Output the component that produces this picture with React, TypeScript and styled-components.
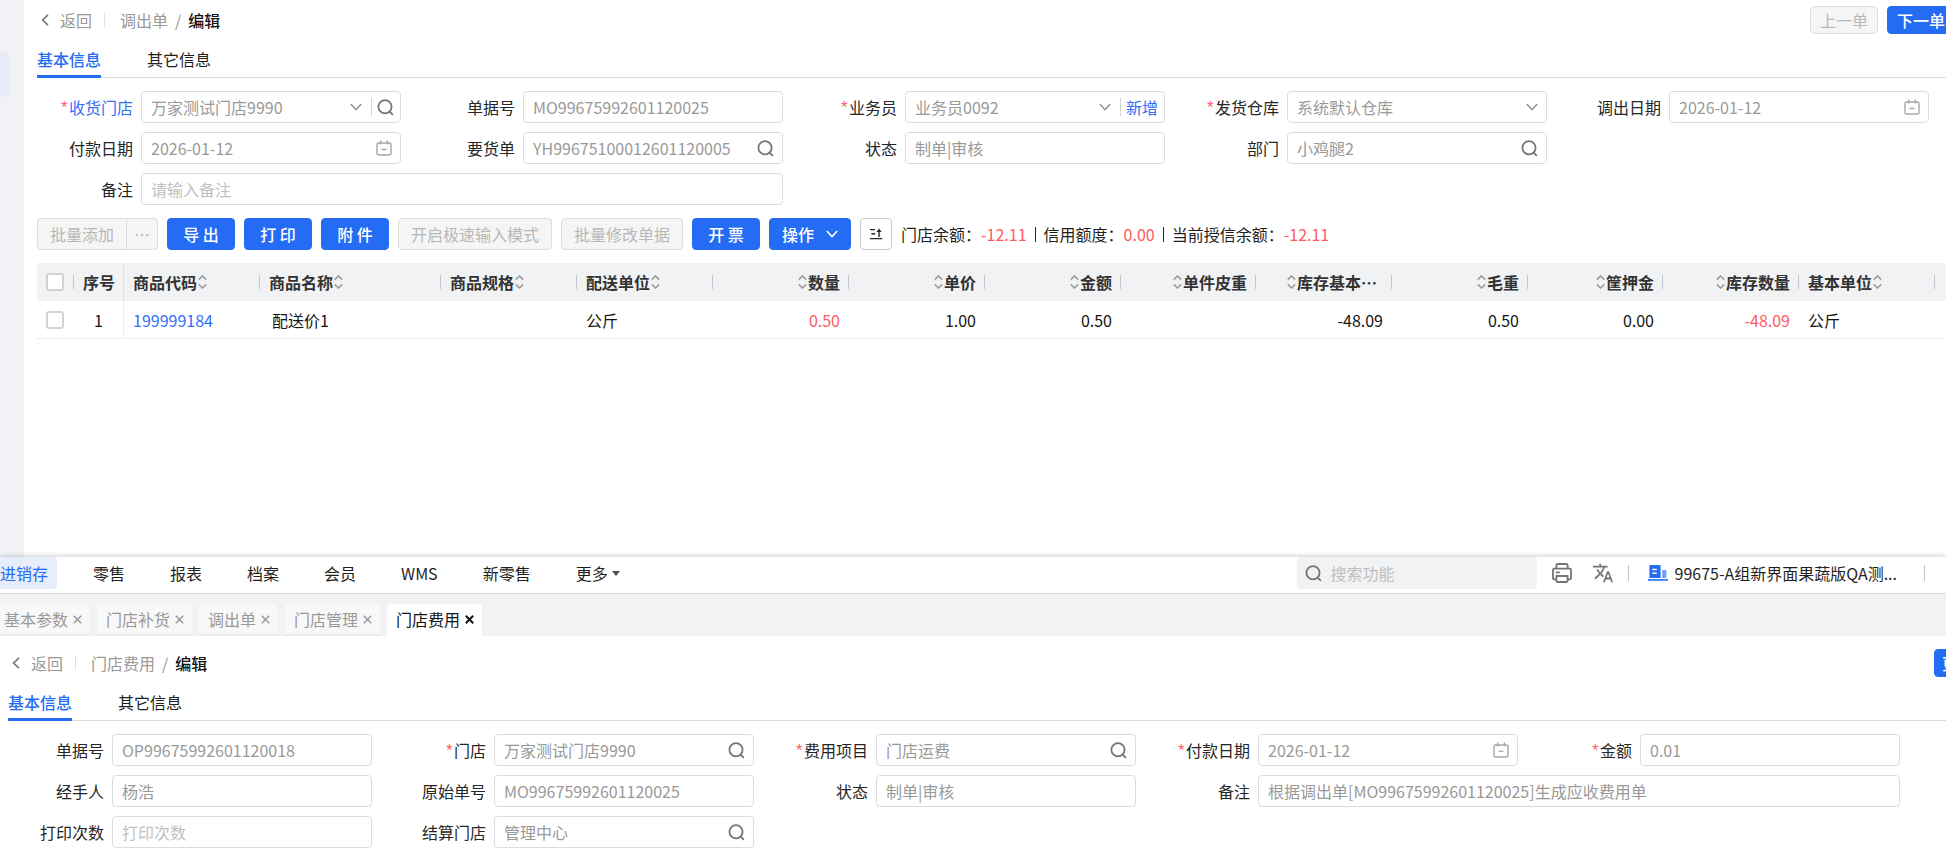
import React, { useId, useState } from "react";
import styled, { createGlobalStyle, css } from "styled-components";
import { MdTranslate } from "react-icons/md";

const BLUE = "#246cf4";
const RED = "#ff5a5f";

const GlobalStyle = createGlobalStyle`
  *, *::before, *::after { box-sizing: border-box; }
  html { overflow: hidden; }
  body { margin: 0; background: #fff; color: #1f1f1f; font: 16px/24px "Noto Sans CJK SC", sans-serif; }
  button, input, select { font: inherit; color: inherit; margin: 0; }
  a { color: inherit; text-decoration: none; }
  svg { display: block; flex: none; }
`;

/* ---------- icons ---------- */

const SearchIcon = () => (
  <svg width="17" height="17" viewBox="0 0 17 17" fill="none" stroke="#757575" strokeWidth="1.8" strokeLinecap="round">
    <circle cx="8" cy="7.8" r="6.6" />
    <path d="M12.6 12.6 15.4 15.4" />
  </svg>
);

const CaretIcon = ({ color = "#999" }: { color?: string }) => (
  <svg width="12" height="8" viewBox="0 0 12 8" fill="none" stroke={color} strokeWidth="1.6">
    <path d="M.8 1 6 6.6 11.2 1" />
  </svg>
);

const CalendarIcon = () => (
  <svg width="16" height="16" viewBox="0 0 16 16" fill="none" stroke="#a6a6a6" strokeWidth="1.4">
    <rect x="1" y="3" width="14" height="12" rx="1.4" />
    <path d="M4.6 .6v4M11.4 .6v4" />
    <path d="M5.6 9.4h4.8" />
  </svg>
);

const BackIcon = () => (
  <svg width="8" height="12" viewBox="0 0 8 12" fill="none" stroke="#757575" strokeWidth="1.6">
    <path d="M7 .8 1.6 6 7 11.2" />
  </svg>
);

const SortIcon = () => (
  <svg width="9" height="14" viewBox="0 0 9 14" fill="none" stroke="#999" strokeWidth="1.5">
    <path d="M.8 4.6 4.5 1 8.2 4.6M.8 9.4 4.5 13 8.2 9.4" />
  </svg>
);

const RaiseIcon = () => (
  <svg width="14" height="12" viewBox="0 0 14 12" fill="none" stroke="#262626" strokeWidth="1.4">
    <path d="M1 1.6h5M2.4 5.8h3.8M.8 10.6h12.4" />
    <path d="M10 9V3" />
    <path d="M7.4 4 10 .4 12.600 4z" fill="#262626" stroke="none" />
  </svg>
);

const CloseIcon = ({ strong }: { strong?: boolean }) => (
  <svg width="9" height="9" viewBox="0 0 9 9" stroke={strong ? "#111" : "#999"} strokeWidth={strong ? 2 : 1.5}>
    <path d="M.8 .8 8.2 8.2M8.2 .8 .8 8.2" />
  </svg>
);

const PrinterIcon = () => (
  <svg width="20" height="20" viewBox="0 0 20 20" fill="none" stroke="#757575" strokeWidth="1.8" strokeLinejoin="round">
    <path d="M4.4 5.6V2.2q0-1.2 1.2-1.2h8.8q1.2 0 1.2 1.2v3.4" />
    <path d="M4.4 16.4H2.2q-1.2 0-1.2-1.2V7q0-1.4 1.4-1.4h15.2Q19 5.6 19 7v8.2q0 1.2-1.2 1.2h-2.2" />
    <path d="M4.4 13h11.2v4.8q0 1.2-1.2 1.2H5.6q-1.2 0-1.2-1.2z" />
    <path d="M3.8 9.4h4" />
  </svg>
);

const CompanyIcon = () => (
  <svg width="20" height="16" viewBox="0 0 20 16">
    <path d="M2.6 0h8.8q1.2 0 1.2 1.2V13H1.4V1.2Q1.4 0 2.6 0z" fill={BLUE} />
    <path d="M4.4 4.4h4.4M4.4 8.2h4.4" stroke="#fff" strokeWidth="1.5" />
    <path d="M14.2 5h3.2q1 0 1 1v7h-4.2z" fill="#6f9df8" />
    <path d="M0 14.9h20" stroke={BLUE} strokeWidth="1.6" />
  </svg>
);

/* ---------- page panels ---------- */

const Page = styled.div`
  display: flex;
  flex-direction: column;
  min-height: 100vh;
  overflow: hidden;
`;

const TopPanel = styled.div`
  flex: 1;
  display: flex;
`;

const SideRail = styled.aside`
  flex: none;
  width: 24px;
  padding-top: 52px;
  background: #f1f2f5;
`;

const RailItem = styled.div`
  width: 10px;
  height: 45px;
  border-radius: 0 8px 8px 0;
  background: #e8ebf6;
`;

const Sheet = styled.main`
  flex: 1;
  min-width: 0;
  padding-left: 13px;
`;

const BottomPanel = styled.div`
  background: #fff;
  box-shadow: 0 -1px 5px rgba(0, 0, 0, 0.2);
`;

const LowerSheet = styled.main`
  padding: 7px 0 10px 8px;
`;

/* ---------- breadcrumb row ---------- */

const CrumbRow = styled.header`
  display: flex;
  align-items: center;
  justify-content: space-between;
  height: 40px;
`;

const Crumbs = styled.nav`
  display: flex;
  align-items: center;
  padding-left: 4px;
  color: #999;
`;

const CrumbLink = styled.a`
  display: flex;
  align-items: center;
  gap: 11px;
`;

const CrumbRule = styled.span`
  width: 1px;
  height: 14px;
  margin: 0 15px 0 12px;
  background: #e0e0e0;
`;

const Slash = styled.span`
  margin: 0 7px;
`;

const CrumbCurrent = styled.span`
  color: #141414;
  font-weight: 500;
`;

const Actions = styled.div<{ $overhang: number }>`
  display: flex;
  gap: 9px;
  margin-right: -${(p) => p.$overhang}px;
`;

/* ---------- buttons ---------- */

const Button = styled.button<{ $kind?: "primary" | "muted" | "plain"; $small?: boolean; $width?: number }>`
  display: inline-flex;
  align-items: center;
  justify-content: center;
  gap: 12px;
  height: ${(p) => (p.$small ? 28 : 32)}px;
  padding: 0 12px;
  ${(p) => p.$width && css`width: ${p.$width}px; padding: 0;`}
  border: 1px solid ${BLUE};
  border-radius: 4px;
  background: ${BLUE};
  color: #fff;
  font-weight: 500;
  white-space: pre;
  ${(p) =>
    p.$kind === "muted" &&
    css`
      border-color: #dcdcdc;
      background: #f5f5f5;
      color: #b8b8b8;
      font-weight: 400;
    `}
  ${(p) =>
    p.$kind === "plain" &&
    css`
      border-color: #c8c8c8;
      background: #fff;
    `}
`;

const SplitButton = styled.div`
  display: flex;
  ${Button}:first-child { border-radius: 4px 0 0 4px; }
  ${Button}:last-child { border-left: 0; border-radius: 0 4px 4px 0; }
`;

/* ---------- tabs ---------- */

const TabRow = styled.div`
  display: flex;
  gap: 46px;
  border-bottom: 1px solid #dcdcdc;
`;

const Tab = styled.button<{ $active?: boolean }>`
  height: 38px;
  margin-bottom: -1px;
  padding: 3px 0 0;
  border: 0;
  border-bottom: 3px solid ${(p) => (p.$active ? BLUE : "transparent")};
  background: none;
  color: ${(p) => (p.$active ? BLUE : "#1f1f1f")};
  font-weight: ${(p) => (p.$active ? 500 : 400)};
`;

/* ---------- form ---------- */

const FormGrid = styled.form<{ $right: number }>`
  display: grid;
  grid-template-columns: repeat(5, minmax(0, 1fr));
  gap: 9px 18px;
  padding: 13px ${(p) => p.$right}px 0 0;
`;

const FieldRow = styled.div<{ $span: number }>`
  grid-column: span ${(p) => p.$span};
  display: flex;
  align-items: center;
`;

const Label = styled.label<{ $link?: boolean }>`
  flex: none;
  display: flex;
  justify-content: flex-end;
  align-items: center;
  width: 104px;
  padding-right: 8px;
  white-space: nowrap;
  color: ${(p) => (p.$link ? "#3370f5" : "#262626")};
`;

const Star = styled.span`
  color: ${RED};
  font-family: "Liberation Mono", monospace;
  padding-top: 3px;
`;

const Box = styled.div<{ $tight?: boolean }>`
  flex: 1;
  min-width: 0;
  display: flex;
  align-items: center;
  gap: 9px;
  height: 32px;
  padding: 0 ${(p) => (p.$tight ? 6 : 8)}px 0 9px;
  border: 1px solid #dcdcdc;
  border-radius: 4px;
  background: #fff;
`;

const control = css`
  flex: 1;
  min-width: 0;
  height: 30px;
  padding: 0;
  border: 0;
  outline: 0;
  background: none;
  color: #999;
`;

const Input = styled.input`
  ${control}
  &::placeholder { color: #bfbfbf; opacity: 1; }
`;

const Select = styled.select`
  ${control}
  appearance: none;
`;

const Inset = styled.span`
  display: flex;
  align-items: center;
  gap: 5px;
`;

const InsetRule = styled.i`
  width: 1px;
  height: 18px;
  background: #d4d4d4;
`;

const IconButton = styled.button`
  display: flex;
  padding: 0;
  border: 0;
  background: none;
  color: #3370f5;
  line-height: 24px;
  white-space: nowrap;
`;

type FieldProps = {
  label: string;
  value?: string;
  placeholder?: string;
  required?: boolean;
  link?: boolean;
  span?: number;
  kind?: "text" | "search" | "date" | "select" | "selectSearch" | "selectAdd";
};

function Field({ label, value = "", placeholder, required, link, span = 1, kind = "text" }: FieldProps) {
  const id = useId();
  const [text, setText] = useState(value);
  const isSelect = kind.startsWith("select");
  return (
    <FieldRow $span={span}>
      <Label htmlFor={id} $link={link}>
        {required && <Star>*</Star>}
        {label}
      </Label>
      <Box $tight={kind === "selectSearch" || kind === "selectAdd"}>
        {isSelect ? (
          <Select id={id} defaultValue={value}>
            <option>{value}</option>
          </Select>
        ) : (
          <Input id={id} value={text} placeholder={placeholder} onChange={(e) => setText(e.target.value)} />
        )}
        {isSelect && <CaretIcon />}
        {kind === "search" && (
          <IconButton type="button" aria-label={`搜索${label}`}>
            <SearchIcon />
          </IconButton>
        )}
        {kind === "date" && (
          <IconButton type="button" aria-label={`选择${label}`}>
            <CalendarIcon />
          </IconButton>
        )}
        {kind === "selectSearch" && (
          <Inset>
            <InsetRule />
            <IconButton type="button" aria-label={`搜索${label}`}>
              <SearchIcon />
            </IconButton>
          </Inset>
        )}
        {kind === "selectAdd" && (
          <Inset>
            <InsetRule />
            <IconButton type="button">新增</IconButton>
          </Inset>
        )}
      </Box>
    </FieldRow>
  );
}

/* ---------- toolbar ---------- */

const Toolbar = styled.div`
  display: flex;
  align-items: center;
  gap: 9px;
  padding: 13px 0;
  white-space: nowrap;
`;

const Balances = styled.div`
  display: flex;
  align-items: center;
  gap: 8px;
`;

const BalanceRule = styled.i`
  width: 1px;
  height: 15px;
  background: #262626;
`;

const Amount = styled.span`
  color: ${RED};
`;

/* ---------- goods table ---------- */

const Table = styled.table`
  width: 100%;
  table-layout: fixed;
  border-collapse: separate;
  border-spacing: 0;
`;

const HeadCell = styled.th<{ $rule?: "short" | "full" }>`
  height: 38px;
  padding: 0 9px;
  background: #f1f2f4;
  color: #333;
  font-weight: 700;
  white-space: nowrap;
  ${(p) =>
    p.$rule === "short" &&
    css`
      background: linear-gradient(#c4c7ce, #c4c7ce) right center / 1px 14px no-repeat #f1f2f4;
    `}
  ${(p) => p.$rule === "full" && css`border-right: 1px solid #e0e1e4;`}
`;

const HeadInner = styled.div<{ $end?: boolean; $clipped?: boolean }>`
  display: flex;
  align-items: center;
  justify-content: ${(p) => (p.$end ? "flex-end" : "flex-start")};
  gap: 1px;
  padding-right: ${(p) => (p.$clipped ? 6 : 0)}px;
`;

const Cell = styled.td<{ $end?: boolean; $tone?: "red" | "link"; $full?: boolean; $center?: boolean; $indent?: boolean }>`
  height: 38px;
  padding: 0 9px 0 ${(p) => (p.$indent ? 12 : 9)}px;
  border-bottom: 1px solid #ececec;
  border-right: ${(p) => (p.$full ? "1px solid #ececec" : "0")};
  text-align: ${(p) => (p.$end ? "right" : p.$center ? "center" : "left")};
  color: ${(p) => (p.$tone === "red" ? RED : p.$tone === "link" ? "#3370f5" : "#141414")};
  white-space: nowrap;
`;

const CheckBox = styled.input`
  appearance: none;
  display: block;
  width: 18px;
  height: 18px;
  border: 2px solid #d2d2d2;
  border-radius: 3px;
  background: #fff;
`;

const columns: {
  title: string;
  width: number;
  end?: boolean;
  clipped?: boolean;
  value?: string;
  tone?: "red" | "link";
  indent?: boolean;
}[] = [
  { title: "商品代码", width: 136, value: "199999184", tone: "link" },
  { title: "商品名称", width: 181, value: "配送价1", indent: true },
  { title: "商品规格", width: 136 },
  { title: "配送单位", width: 136, value: "公斤" },
  { title: "数量", width: 136, end: true, value: "0.50", tone: "red" },
  { title: "单价", width: 136, end: true, value: "1.00" },
  { title: "金额", width: 136, end: true, value: "0.50" },
  { title: "单件皮重", width: 135, end: true },
  { title: "库存基本…", width: 136, end: true, clipped: true, value: "-48.09" },
  { title: "毛重", width: 136, end: true, value: "0.50" },
  { title: "筐押金", width: 135, end: true, value: "0.00" },
  { title: "库存数量", width: 136, end: true, value: "-48.09", tone: "red" },
  { title: "基本单位", width: 136, value: "公斤" },
];

function GoodsTable() {
  return (
    <Table>
      <colgroup>
        <col width={37} />
        <col width={50} />
        {columns.map((c) => (
          <col key={c.title} width={c.width} />
        ))}
        <col />
      </colgroup>
      <thead>
        <tr>
          <HeadCell $rule="short">
            <CheckBox type="checkbox" aria-label="全选" />
          </HeadCell>
          <HeadCell $rule="full">序号</HeadCell>
          {columns.map((c) => (
            <HeadCell key={c.title} $rule="short" scope="col">
              <HeadInner $end={c.end} $clipped={c.clipped}>
                {c.end && <SortIcon />}
                <span>{c.title}</span>
                {!c.end && <SortIcon />}
              </HeadInner>
            </HeadCell>
          ))}
          <HeadCell />
        </tr>
      </thead>
      <tbody>
        <tr>
          <Cell>
            <CheckBox type="checkbox" aria-label="选择第1行" />
          </Cell>
          <Cell $full $center>
            1
          </Cell>
          {columns.map((c) => (
            <Cell key={c.title} $end={c.end} $tone={c.tone} $indent={c.indent}>
              {c.tone === "link" ? <a href="#goods">{c.value}</a> : c.value}
            </Cell>
          ))}
          <Cell />
        </tr>
      </tbody>
    </Table>
  );
}

/* ---------- main navigation ---------- */

const NavBar = styled.header`
  display: flex;
  align-items: flex-start;
  justify-content: space-between;
  height: 37px;
  border-bottom: 1px solid #dcdcdc;
  white-space: nowrap;
`;

const NavGroup = styled.nav`
  display: flex;
  gap: 36px;
`;

const NavLink = styled.a<{ $active?: boolean }>`
  display: flex;
  align-items: center;
  gap: 4px;
  height: 32px;
  padding-right: 9px;
  color: ${(p) => (p.$active ? BLUE : "#1f1f1f")};
  background: ${(p) => (p.$active ? "#e7edfb" : "none")};
  border-radius: 0 4px 4px 0;
`;

const MoreArrow = styled.span`
  border: solid transparent;
  border-width: 5px 4px 0;
  border-top-color: #4d4d4d;
`;

const NavTools = styled.div`
  display: flex;
  align-items: center;
  height: 32px;
  padding-right: 21px;
`;

const SearchBox = styled.label`
  display: flex;
  align-items: center;
  gap: 9px;
  width: 240px;
  height: 32px;
  margin-right: 15px;
  padding: 0 8px;
  border-radius: 4px;
  background: #f1f2f4;
`;

const ToolButton = styled(IconButton)`
  color: #757575;
`;

const ToolGroup = styled.div`
  display: flex;
  align-items: center;
  gap: 20px;
  margin-right: 14px;
`;

const NavRule = styled.i`
  width: 1px;
  height: 16px;
  background: #c4c4c4;
`;

const Company = styled.a`
  display: flex;
  align-items: center;
  gap: 7px;
  margin: 0 27px 0 19px;
`;

/* ---------- opened page tabs ---------- */

const PageTabs = styled.div`
  display: flex;
  gap: 7px;
  padding-top: 10px;
  background: #f1f2f4;
`;

const PageTab = styled.div<{ $active?: boolean; $cut?: boolean }>`
  display: flex;
  align-items: center;
  gap: 5px;
  height: 32px;
  padding: 0 8px 0 ${(p) => (p.$cut ? 4 : 9)}px;
  border-bottom: 2px solid ${(p) => (p.$active ? "#fff" : "#ebebeb")};
  border-radius: 4px 4px 0 0;
  background: ${(p) => (p.$active ? "#fff" : "#f8f8f8")};
  color: ${(p) => (p.$active ? "#141414" : "#999")};
  white-space: nowrap;
`;

const pageTabs = ["基本参数", "门店补货", "调出单", "门店管理", "门店费用"];
const navItems = ["进销存", "零售", "报表", "档案", "会员", "WMS", "新零售"];

function Heading({ parent, overhang, children }: { parent: string; overhang: number; children: React.ReactNode }) {
  const [tab, setTab] = useState(0);
  return (
    <>
      <CrumbRow>
        <Crumbs>
          <CrumbLink href="#back">
            <BackIcon />
            返回
          </CrumbLink>
          <CrumbRule />
          <a href="#list">{parent}</a>
          <Slash>/</Slash>
          <CrumbCurrent>编辑</CrumbCurrent>
        </Crumbs>
        <Actions $overhang={overhang}>{children}</Actions>
      </CrumbRow>
      <TabRow role="tablist">
        {["基本信息", "其它信息"].map((name, i) => (
          <Tab key={name} role="tab" aria-selected={tab === i} $active={tab === i} onClick={() => setTab(i)}>
            {name}
          </Tab>
        ))}
      </TabRow>
    </>
  );
}

export default function App() {
  return (
    <Page>
      <GlobalStyle />
      <TopPanel>
        <SideRail>
          <RailItem />
        </SideRail>
        <Sheet>
          <Heading parent="调出单" overhang={9}>
            <Button $kind="muted" $small $width={68} disabled>
              上一单
            </Button>
            <Button $small $width={68}>
              下一单
            </Button>
          </Heading>
          <FormGrid $right={17}>
            <Field label="收货门店" value="万家测试门店9990" required link kind="selectSearch" />
            <Field label="单据号" value="MO99675992601120025" />
            <Field label="业务员" value="业务员0092" required kind="selectAdd" />
            <Field label="发货仓库" value="系统默认仓库" required kind="select" />
            <Field label="调出日期" value="2026-01-12" kind="date" />
            <Field label="付款日期" value="2026-01-12" kind="date" />
            <Field label="要货单" value="YH99675100012601120005" kind="search" />
            <Field label="状态" value="制单|审核" />
            <Field label="部门" value="小鸡腿2" kind="search" />
            <span />
            <Field label="备注" placeholder="请输入备注" span={2} />
          </FormGrid>
          <Toolbar>
            <SplitButton>
              <Button $kind="muted" $width={90} disabled>
                批量添加
              </Button>
              <Button $kind="muted" $width={31} disabled aria-label="更多批量操作">
                …
              </Button>
            </SplitButton>
            <Button $width={68}>导 出</Button>
            <Button $width={68}>打 印</Button>
            <Button $width={68}>附 件</Button>
            <Button $kind="muted" disabled>
              开启极速输入模式
            </Button>
            <Button $kind="muted" disabled>
              批量修改单据
            </Button>
            <Button $width={68}>开 票</Button>
            <Button>
              操作
              <CaretIcon color="#fff" />
            </Button>
            <Button $kind="plain" $width={32} aria-label="置顶">
              <RaiseIcon />
            </Button>
            <Balances>
              <span>
                门店余额：<Amount>-12.11</Amount>
              </span>
              <BalanceRule />
              <span>
                信用额度：<Amount>0.00</Amount>
              </span>
              <BalanceRule />
              <span>
                当前授信余额：<Amount>-12.11</Amount>
              </span>
            </Balances>
          </Toolbar>
          <GoodsTable />
        </Sheet>
      </TopPanel>

      <BottomPanel>
        <NavBar>
          <NavGroup>
            {navItems.map((name, i) => (
              <NavLink key={name} href={`#nav-${i}`} $active={i === 0}>
                {name}
              </NavLink>
            ))}
            <NavLink href="#nav-more">
              更多
              <MoreArrow />
            </NavLink>
          </NavGroup>
          <NavTools>
            <SearchBox>
              <SearchIcon />
              <Input aria-label="搜索功能" placeholder="搜索功能" />
            </SearchBox>
            <ToolGroup>
              <ToolButton aria-label="打印">
                <PrinterIcon />
              </ToolButton>
              <ToolButton aria-label="语言">
                <MdTranslate size={22} />
              </ToolButton>
            </ToolGroup>
            <NavRule />
            <Company href="#company">
              <CompanyIcon />
              99675-A组新界面果蔬版QA测...
            </Company>
            <NavRule />
          </NavTools>
        </NavBar>
        <PageTabs>
          {pageTabs.map((name, i) => (
            <PageTab key={name} $active={i === 4} $cut={i === 0}>
              {name}
              <IconButton aria-label={`关闭${name}`}>
                <CloseIcon strong={i === 4} />
              </IconButton>
            </PageTab>
          ))}
        </PageTabs>
        <LowerSheet>
          <Heading parent="门店费用" overhang={36}>
            <Button $small $width={48}>
              更多
            </Button>
          </Heading>
          <FormGrid $right={46}>
            <Field label="单据号" value="OP99675992601120018" />
            <Field label="门店" value="万家测试门店9990" required kind="search" />
            <Field label="费用项目" value="门店运费" required kind="search" />
            <Field label="付款日期" value="2026-01-12" required kind="date" />
            <Field label="金额" value="0.01" required />
            <Field label="经手人" value="杨浩" />
            <Field label="原始单号" value="MO99675992601120025" />
            <Field label="状态" value="制单|审核" />
            <Field label="备注" value="根据调出单[MO99675992601120025]生成应收费用单" span={2} />
            <Field label="打印次数" placeholder="打印次数" />
            <Field label="结算门店" value="管理中心" kind="search" />
          </FormGrid>
        </LowerSheet>
      </BottomPanel>
    </Page>
  );
}
